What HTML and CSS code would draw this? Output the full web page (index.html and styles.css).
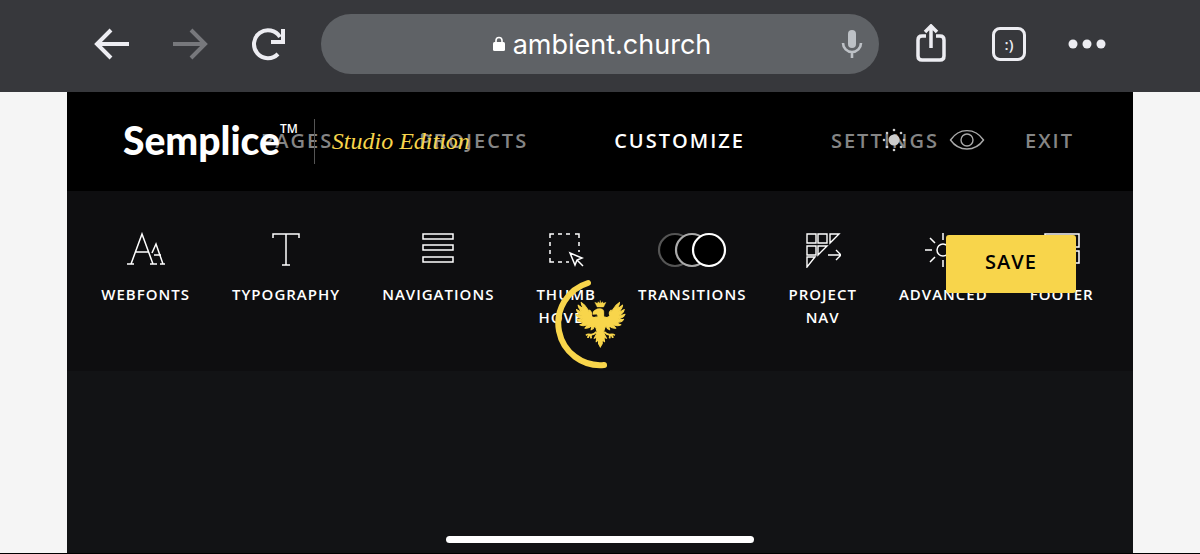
FILE: index.html
```
<!DOCTYPE html>
<html lang="en">
<head>
    <meta charset="UTF-8">
    <meta name="viewport" content="width=device-width, initial-scale=1.0">
    <title>Semplice - Customize</title>
    <link rel="stylesheet" href="styles.css">
</head>
<body>
    <header class="browser-bar">
        <button class="browser-btn" aria-label="Back">
            <svg width="40" height="40" viewBox="0 0 40 40"><path d="M37 20H6M19 6L5 20l14 14" fill="none" stroke="#ededf2" stroke-width="4"/></svg>
        </button>
        <button class="browser-btn" aria-label="Forward" disabled>
            <svg width="40" height="40" viewBox="0 0 40 40"><path d="M3 20h31M21 6l14 14-14 14" fill="none" stroke="#77787c" stroke-width="4"/></svg>
        </button>
        <button class="browser-btn" aria-label="Reload">
            <svg width="40" height="40" viewBox="0 0 40 40"><path d="M30 30A14 14 0 1 1 32 13M35 5v13H23" fill="none" stroke="#ededf2" stroke-width="4"/></svg>
        </button>
        <button class="address">
            <svg class="lock" width="12" height="16" viewBox="0 0 12 16"><path d="M3 7V4.500a3 3 0 0 1 6 0V7" fill="none" stroke="#fff" stroke-width="1.600"/><rect y="6" width="12" height="9" rx="1.500" fill="#fff"/></svg>
            <span>ambient.church</span>
            <svg class="mic" width="22" height="28" viewBox="0 0 22 28"><rect x="7" y="0" width="8" height="18" rx="4" fill="#bdc1c6"/><path d="M2 13a9 9 0 0 0 18 0M11 22v6" fill="none" stroke="#bdc1c6" stroke-width="2.600"/></svg>
        </button>
        <button class="browser-btn" aria-label="Share">
            <svg width="40" height="40" viewBox="0 0 40 40"><path d="M15 12H11q-4 0-4 4v16q0 4 4 4h18q4 0 4-4V16q0-4-4-4h-4M20 24V3M14 8l6-6 6 6" fill="none" stroke="#ededf2" stroke-width="3.500"/></svg>
        </button>
        <button class="browser-btn" aria-label="Tabs"><span class="tabs">:)</span></button>
        <button class="browser-btn" aria-label="More">
            <svg width="40" height="40" viewBox="0 0 40 40" fill="#ededf2"><circle cx="6" cy="20" r="4.500"/><circle cx="20" cy="20" r="4.500"/><circle cx="34" cy="20" r="4.500"/></svg>
        </button>
    </header>

    <main class="admin">
        <div class="top">
            <nav class="main-nav">
                <a href="#pages">Pages</a>
                <a href="#projects">Projects</a>
                <a href="#customize" class="active">Customize</a>
                <a href="#settings">Settings</a>
                <a href="#exit">Exit</a>
            </nav>
            <div class="logo">
                <span class="brand">Semplice</span><span class="tm">TM</span>
                <span class="edition">Studio Edition</span>
            </div>
            <div class="tools">
                <button aria-label="Toggle appearance">
                    <svg width="24" height="24" viewBox="0 0 24 24" fill="#ccc"><circle cx="12" cy="12" r="5.500"/><circle cx="12" cy="2" r="1.300"/><circle cx="12" cy="22" r="1.300"/><circle cx="2" cy="12" r="1.300"/><circle cx="22" cy="12" r="1.300"/><circle cx="5" cy="5" r="1.300"/><circle cx="19" cy="5" r="1.300"/><circle cx="5" cy="19" r="1.300"/><circle cx="19" cy="19" r="1.300"/></svg>
                </button>
                <button aria-label="Preview">
                    <svg width="36" height="24" viewBox="0 0 36 24" fill="none" stroke="#aaa" stroke-width="1.400"><path d="M1.500 12C10-.5 26-.5 34.500 12 26 24 10 24 1.500 12z"/><circle cx="18" cy="12" r="6"/></svg>
                </button>
            </div>
        </div>

        <div class="sub">
            <nav class="sub-nav">
                <a href="#webfonts">
                    <svg width="40" height="36" viewBox="0 0 40 36"><path d="M5 32L16 2l11 30M10 20h12M1 32h7M24 32h7M26 21l4-9 7 20M28 23h7M34 32h5" fill="none" stroke="#fff" stroke-width="1.500"/></svg>
                    Webfonts
                </a>
                <a href="#typography">
                    <svg width="30" height="36" viewBox="0 0 30 36"><path d="M2 6V2h26v4M15 2v31M11 33h8" fill="none" stroke="#fff" stroke-width="1.500"/></svg>
                    Typography
                </a>
                <a href="#navigations">
                    <svg width="32" height="36" viewBox="0 0 32 36" fill="none" stroke="#fff" stroke-width="1.500"><path d="M1 2h30v5H1zM1 13h30v5H1zM1 25h30v5H1z"/></svg>
                    Navigations
                </a>
                <a href="#thumb-hover">
                    <svg width="36" height="36" viewBox="0 0 36 36" fill="none" stroke="#fff" stroke-width="1.500"><path d="M2 6V2h4M10 2h4M18 2h4M27 2h4v4M31 10v4M31 18v2M2 10v4M2 18v4M2 26v4h4M10 30h4M18 30h3"/><path d="M22 21l12 5-5 2-2 5zM29 28l6 6"/></svg>
                    Thumb Hover
                </a>
                <a href="#transitions">
                    <svg width="70" height="36" viewBox="0 0 70 36" fill="#000" stroke-width="2.200"><circle cx="18" cy="18" r="16" stroke="#555"/><circle cx="35" cy="18" r="16" stroke="#aaa"/><circle cx="52" cy="18" r="16" stroke="#fff"/></svg>
                    Transitions
                </a>
                <a href="#project-nav">
                    <svg width="36" height="36" viewBox="0 0 36 36" fill="none" stroke="#fff" stroke-width="1.400"><path d="M2 2h9v9H2zM13 2h9v9h-9zM25 2h9l-9 9zM2 14h9v9H2zM13 14h9l-9 9zM2 25h8L2 35zM23 23h13M31 18l5 5-5 5"/></svg>
                    Project Nav
                </a>
                <a href="#advanced">
                    <svg width="36" height="36" viewBox="0 0 36 36" fill="none" stroke="#fff" stroke-width="1.500"><circle cx="18" cy="18" r="6"/><path d="M18 1v7M18 28v7M0 18h7M29 18h7M5 6l5 5M26 25l5 5M5 30l5-5M26 11l5-5"/></svg>
                    Advanced
                </a>
                <a href="#footer">
                    <svg width="36" height="36" viewBox="0 0 36 36" fill="none" stroke="#fff" stroke-width="1.500"><path d="M1 2h34v13H1zM1 19h14v12H1zM21 19h14v12H21z"/></svg>
                    Footer
                </a>
            </nav>
            <button class="save">Save</button>
            <svg class="spinner" width="90" height="90" viewBox="0 0 90 90" role="img" aria-label="Loading">
                <path d="M34 4A42 42 0 0 0 50 86" fill="none" stroke="#f8d54b" stroke-width="6" stroke-linecap="round"/>
                <g transform="translate(-15 -11) scale(.3400)" fill="#f8d54b" stroke="#f8d54b" stroke-linejoin="round">
                    <path d="M171 115l-7-14 8 3 2-5 5 5 1-9 2 9 5-5 2 5 8-3-7 14z"/>
                    <path d="M168 152q7-8 2-16l-12 1q-1-10 8-14 6-5 14-4 12 1 11 13-1 10 2 20z"/>
                    <g id="half">
                        <path stroke-width="3" d="M181 146L168 144Q158 148 152 140 158 132 149 124 147 130 145 124 136 108 124 101 124 110 131 119 121 115 115 109 116 120 127 129 117 127 110 122 113 134 126 139 116 140 108 136 114 148 128 149 119 153 112 151 119 162 133 159 127 166 120 167 132 173 143 166 140 173 135 177 148 178 155 168 156 175 153 182 162 178 164 170L168 177Q173 188 168 196L162 207 170 204 168 217 175 211 175 223 181 232z"/>
                        <path d="M169 188q-8 9-17 8-8-3-14 2M152 196q-8 3-8 10M154 197q-3 5 0 10" fill="none" stroke-width="5"/>
                    </g>
                    <use href="#half" transform="translate(361 0) scale(-1 1)"/>
                </g>
            </svg>
        </div>
    </main>
    <div class="home-indicator"></div>
</body>
</html>
```
FILE: styles.css
```
*{box-sizing:border-box;}
body{margin:0;min-height:100vh;display:flex;flex-direction:column;background-color:#f5f5f5;border-bottom:1px solid #000;font-family:"Open Sans",sans-serif;color:#fff;}
button{border:none;padding:0;background:none;color:inherit;font:inherit;cursor:pointer;}
a{color:inherit;text-decoration:none;}
svg{display:block;}

.browser-bar{display:flex;align-items:center;height:92px;padding:0 93px 4px 92px;background-color:#37383c;}
.browser-btn{width:40px;height:40px;flex:none;}
.browser-btn + .browser-btn{margin-left:38px;}
.address{position:relative;flex:1;height:60px;margin:0 32px 0 33px;padding-left:4px;border-radius:30px;background-color:#5f6266;display:flex;align-items:center;justify-content:center;gap:8px;font-family:Inter,sans-serif;font-size:27px;}
.mic{position:absolute;right:16px;top:16px;}
.tabs{display:flex;align-items:center;justify-content:center;width:34px;height:34px;margin:0 auto;border:3px solid #ededf2;border-radius:8px;font-size:15px;font-weight:600;color:#ededf2;}

.admin{flex:1;margin:0 67px;background-color:#121315;}
.top{position:relative;height:99px;background-color:#000;}
.main-nav{height:99px;display:flex;align-items:center;justify-content:flex-end;gap:86px;padding:0 59px 2px 0;font-size:20px;font-weight:600;letter-spacing:2px;text-transform:uppercase;color:#858585;}
.main-nav .active{color:#fff;}
.logo{position:absolute;left:56px;top:27px;height:45px;display:flex;align-items:center;}
.brand{font-family:Lato,sans-serif;font-size:39px;font-weight:900;line-height:40px;padding-bottom:4px;}
.tm{align-self:flex-start;font-size:12px;font-weight:600;line-height:20px;}
.edition{margin-left:16px;padding-left:17px;border-left:1px solid #555;font-family:"Liberation Serif",serif;font-size:24px;font-style:italic;line-height:45px;color:#f8d54b;}
.tools{position:absolute;right:148px;top:36px;display:flex;align-items:center;gap:43px;}

.sub{position:relative;background-color:#0e0e10;}
.sub-nav{display:flex;justify-content:center;gap:42px;height:180px;padding:41px 5px 0 0;font-size:15px;font-weight:600;line-height:23px;letter-spacing:1px;text-align:center;text-transform:uppercase;}
.sub-nav a{width:min-content;}
.sub-nav svg{margin:0 auto 15px;}
.save{position:absolute;right:57px;top:44px;width:130px;height:58px;padding-bottom:5px;border-radius:3px;background-color:#f8d54b;color:#000;font-size:20px;font-weight:600;letter-spacing:1px;text-transform:uppercase;}
.spinner{position:absolute;left:50%;top:88px;margin-left:-46px;}

.home-indicator{position:fixed;left:50%;bottom:11px;width:308px;height:7px;margin-left:-154px;border-radius:4px;background-color:#fff;}
```
